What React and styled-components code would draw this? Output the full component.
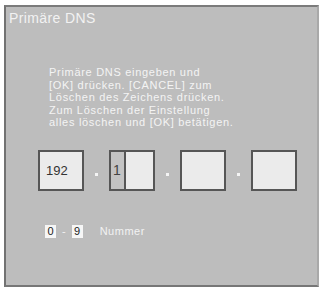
import { createGlobalStyle, styled } from "styled-components";

const GlobalStyle = createGlobalStyle`
  html, body {
    margin: 0;
    padding: 0;
    background: #ffffff;
  }
  body {
    font-family: "Liberation Sans", Arial, sans-serif;
  }
`;

const Panel = styled.div`
  box-sizing: border-box;
  width: 315px;
  height: 282px;
  margin: 5px 0 0 4px;
  background: #bdbdbd;
  border-top: 2px solid #7b7b7b;
  border-left: 2px solid #727272;
  border-bottom: 2px solid #777777;
  border-right: 2px solid #a9a9a9;
  display: flex;
  flex-direction: column;
`;

const Title = styled.div`
  color: #f2f2f2;
  font-size: 14px;
  letter-spacing: 0.4px;
  line-height: 16px;
  padding: 3px 0 0 3px;
`;

const Message = styled.div`
  color: #f4f4f4;
  font-size: 11px;
  letter-spacing: 0.7px;
  line-height: 12.6px;
  margin: 40px 0 0 43px;
`;

const AddressRow = styled.div`
  display: flex;
  margin: 21px 0 0 32px;
`;

const Octet = styled.div`
  box-sizing: border-box;
  width: 46px;
  height: 41px;
  border: 2px solid #565656;
  background: #ebebeb;
  display: flex;
  align-items: center;
  color: #333333;
  font-size: 13px;
  padding-left: ${(p) => (p.$editing ? 0 : "6px")};
`;

const Cursor = styled.div`
  box-sizing: border-box;
  width: 15px;
  height: 100%;
  background: #c3c3c3;
  border-right: 2px solid #565656;
  display: flex;
  align-items: center;
  padding-left: 2px;
  color: #444444;
  font-size: 14px;
`;

const Dot = styled.div`
  width: 3px;
  height: 3px;
  background: #f4f4f4;
  margin: 0 11px 15px;
  align-self: flex-end;
`;

const HintRow = styled.div`
  display: flex;
  align-items: center;
  margin: 34px 0 0 39px;
  color: #f2f2f2;
  font-size: 11px;
`;

const Key = styled.span`
  display: inline-flex;
  align-items: center;
  justify-content: center;
  width: 11px;
  height: 13px;
  background: #f6f6f6;
  color: #222222;
  font-size: 11px;
`;

const Dash = styled.span`
  margin: 0 6px;
`;

const Label = styled.span`
  margin-left: 17px;
  letter-spacing: 0.5px;
`;

const octets = ["192", "", "", ""];

export default function App() {
  return (
    <>
      <GlobalStyle />
      <Panel>
        <Title>Primäre DNS</Title>
        <Message>
          Primäre DNS eingeben und
          <br />
          [OK] drücken. [CANCEL] zum
          <br />
          Löschen des Zeichens drücken.
          <br />
          Zum Löschen der Einstellung
          <br />
          alles löschen und [OK] betätigen.
        </Message>
        <AddressRow>
          {octets.map((value, i) => (
            <div key={i} style={{ display: "contents" }}>
              {i > 0 && <Dot />}
              {i === 1 ? (
                <Octet $editing>
                  <Cursor>1</Cursor>
                </Octet>
              ) : (
                <Octet>{value}</Octet>
              )}
            </div>
          ))}
        </AddressRow>
        <HintRow>
          <Key>0</Key>
          <Dash>-</Dash>
          <Key>9</Key>
          <Label>Nummer</Label>
        </HintRow>
      </Panel>
    </>
  );
}
